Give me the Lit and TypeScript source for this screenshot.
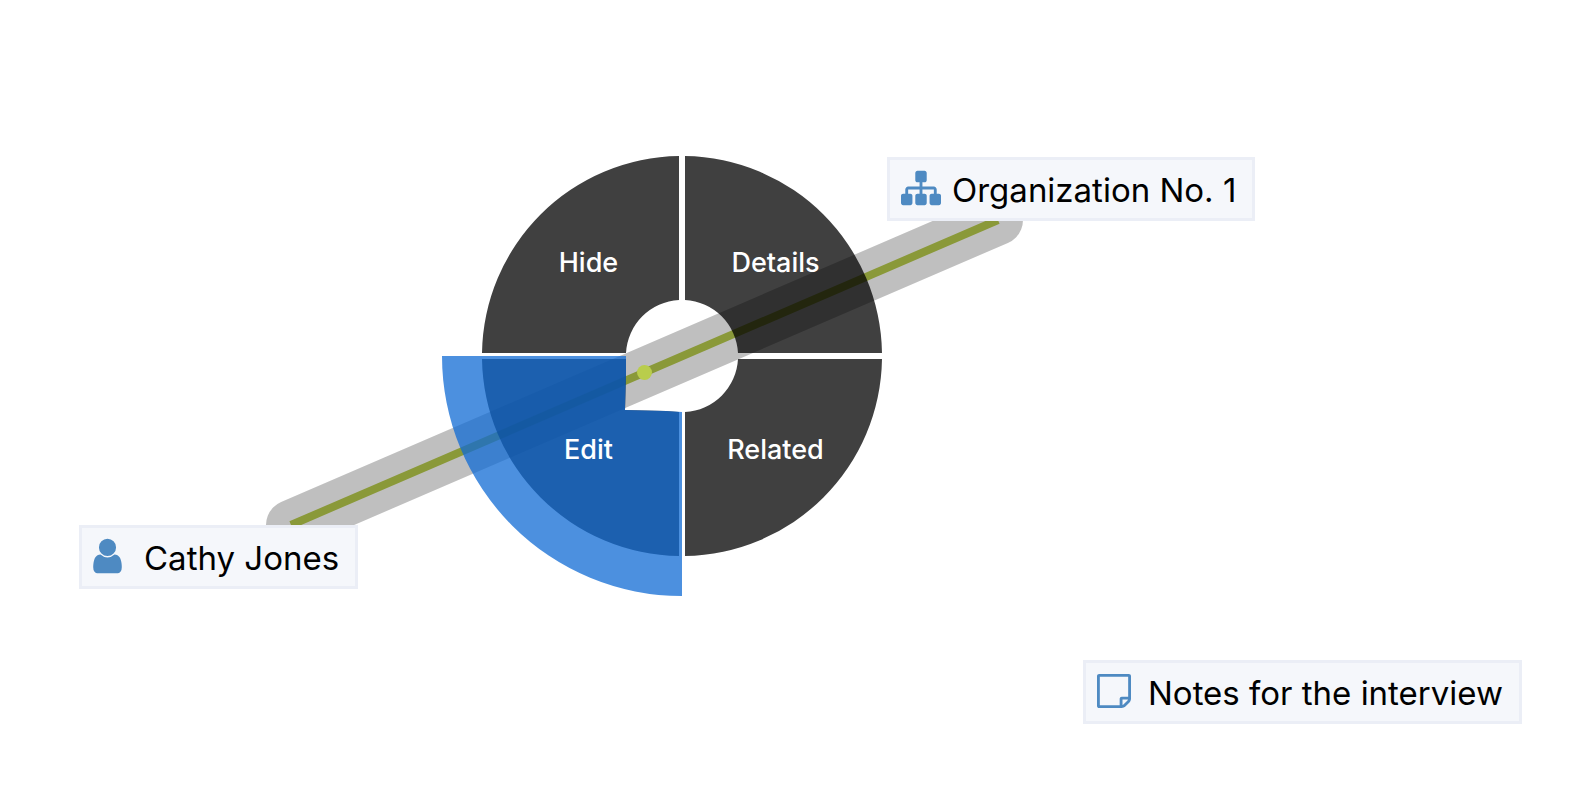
import { LitElement, html, css, svg } from "lit";
import { customElement, property } from "lit/decorators.js";

type IconName = "user" | "sitemap" | "note";

const ICONS: Record<IconName, { box: string; width: number; path: string }> = {
  user: {
    box: "256 0 1280 1792",
    width: 29,
    path: "M1536 1399q0 109-50 187t-120 78h-940q-70 0-120-78t-50-187q0-85 8.5-160.5t31.5-152 58.5-131 94-89 134.5-34.5q131 128 313 128t313-128q76 0 134.5 34.5t94 89 58.5 131 31.5 152 8.5 160.5zm-256-887q0 159-112.5 271.5t-271.5 112.5-271.5-112.5-112.5-271.5 112.5-271.5 271.5-112.5 271.5 112.5 112.5 271.5z",
  },
  sitemap: {
    box: "0 0 1792 1792",
    width: 40,
    path: "M1792 1248v320q0 40-28 68t-68 28h-320q-40 0-68-28t-28-68v-320q0-40 28-68t68-28h96v-192h-512v192h96q40 0 68 28t28 68v320q0 40-28 68t-68 28h-320q-40 0-68-28t-28-68v-320q0-40 28-68t68-28h96v-192h-512v192h96q40 0 68 28t28 68v320q0 40-28 68t-68 28h-320q-40 0-68-28t-28-68v-320q0-40 28-68t68-28h96v-192q0-52 38-90t90-38h512v-192h-96q-40 0-68-28t-28-68v-320q0-40 28-68t68-28h320q40 0 68 28t28 68v320q0 40-28 68t-68 28h-96v192h512q52 0 90 38t38 90v192h96q40 0 68 28t28 68z",
  },
  note: {
    box: "128 0 1536 1792",
    width: 34,
    path: "M1528 1280h-248v248q29-10 41-22l185-185q12-12 22-41zm-280-128h288v-896h-1280v1280h896v-288q0-40 28-68t68-28zm416-928v1024q0 40-20 88t-48 76l-184 184q-28 28-76 48t-88 20h-1024q-40 0-68-28t-28-68v-1344q0-40 28-68t68-28h1344q40 0 68 28t28 68z",
  },
};

@customElement("graph-node")
class GraphNode extends LitElement {
  @property() icon: IconName = "user";
  @property() label = "";

  static styles = css`
    :host {
      display: flex;
      align-items: flex-start;
      gap: 11px;
      box-sizing: border-box;
      padding: 8px 16px 8px 11px;
      border: 3px solid #ebeef6;
      background: #f5f7fb;
      color: #000;
      font: 400 33px/40px Inter, "Liberation Sans", sans-serif;
      white-space: nowrap;
    }
    .slot {
      display: flex;
      width: 40px;
    }
    svg {
      display: block;
      height: 40px;
      fill: #4e8ac2;
    }
    .label {
      padding-top: 2px;
    }
  `;

  render() {
    const icon = ICONS[this.icon];
    return html`
      <span class="slot">
        <svg viewBox=${icon.box} width=${icon.width} aria-hidden="true"><path d=${icon.path}></path></svg>
      </span>
      <span class="label">${this.label}</span>
    `;
  }
}

const WEDGES: Record<string, string> = {
  Hide: "M237 40A200 200 0 0 0 40 237H184A56 56 0 0 1 237 184Z",
  Details: "M243 40A200 200 0 0 1 440 237H296A56 56 0 0 0 243 184Z",
  Edit: "M40 243A200 200 0 0 0 237 440V296L224 295L183 294L184 258V243Z",
  Related: "M440 243A200 200 0 0 1 243 440V296A56 56 0 0 0 296 243Z",
};

@customElement("radial-menu")
class RadialMenu extends LitElement {
  static styles = css`
    :host {
      display: grid;
      width: 480px;
      height: 480px;
    }
    svg,
    .items {
      grid-area: 1 / 1;
    }
    .wedge {
      fill: rgb(0 0 0 / 0.75);
    }
    .selected {
      fill: rgb(16 107 212 / 0.75);
    }
    .items {
      display: grid;
      grid-template: 1fr 1fr / 1fr 1fr;
      gap: 6px;
      padding: 40px;
      z-index: 1;
    }
    button {
      border: 0;
      padding: 0;
      background: none;
      color: #fff;
      font: 500 27px/34px Inter, "Liberation Sans", sans-serif;
      cursor: pointer;
    }
    button:nth-child(odd) {
      padding-left: 16px;
    }
    button:nth-child(even) {
      padding-right: 16px;
    }
    button:nth-child(-n + 2) {
      padding-top: 16px;
    }
    button:nth-child(n + 3) {
      padding-bottom: 16px;
    }
  `;

  render() {
    return html`
      <svg viewBox="0 0 480 480" width="480" height="480" aria-hidden="true">
        ${Object.values(WEDGES).map((d) => svg`<path class="wedge" d=${d}></path>`)}
        <path class="selected" d="M0 240A240 240 0 0 0 240 480V296L224 295L183 294L184 258V240Z"></path>
      </svg>
      <div class="items" role="menu">
        ${Object.keys(WEDGES).map((name) => html`<button type="button" role="menuitem">${name}</button>`)}
      </div>
    `;
  }
}

@customElement("app-root")
class AppRoot extends LitElement {
  static styles = css`
    :host {
      display: block;
      position: relative;
      min-height: 100vh;
      overflow: hidden;
      background: #fff;
    }
    .edges,
    graph-node,
    radial-menu {
      position: absolute;
    }
    .edges {
      inset: 0;
      width: 100%;
      height: 100%;
    }
    .line {
      stroke: #b9cd4c;
      stroke-width: 8;
    }
    .halo {
      stroke: rgb(0 0 0 / 0.25);
      stroke-width: 50;
      stroke-linecap: round;
    }
    .handle {
      fill: #b9cd4c;
    }
    .person {
      left: 79px;
      top: 525px;
    }
    .organization {
      left: 887px;
      top: 157px;
    }
    .notes {
      left: 1083px;
      top: 660px;
    }
    radial-menu {
      left: 442px;
      top: 116px;
    }
  `;

  render() {
    return html`
      <svg class="edges" aria-hidden="true">
        <line class="line" x1="291" y1="525" x2="998" y2="220"></line>
        <line class="halo" x1="291" y1="525" x2="998" y2="220"></line>
        <circle class="handle" cx="644.5" cy="372.5" r="7.5"></circle>
      </svg>
      <graph-node class="person" icon="user" label="Cathy Jones"></graph-node>
      <graph-node class="organization" icon="sitemap" label="Organization No. 1"></graph-node>
      <graph-node class="notes" icon="note" label="Notes for the interview"></graph-node>
      <radial-menu></radial-menu>
    `;
  }
}
